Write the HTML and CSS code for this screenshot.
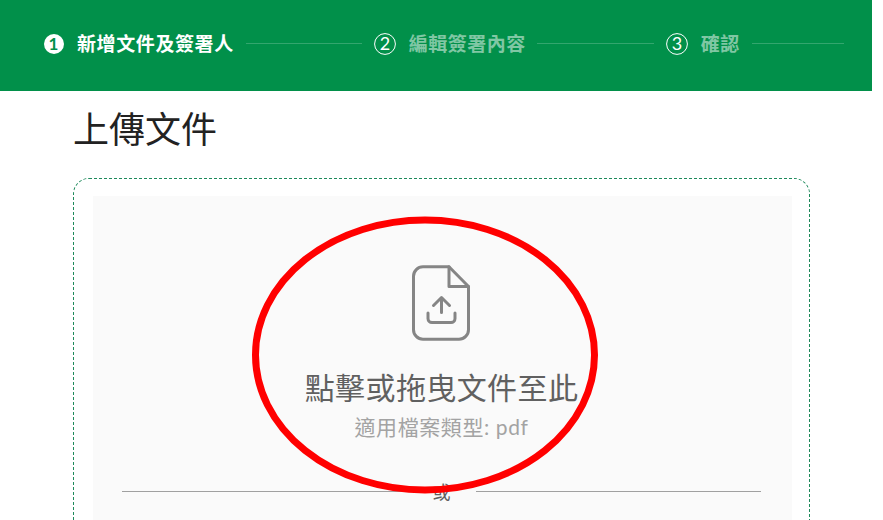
FILE: index.html
```html
<!DOCTYPE html>
<html lang="zh-Hant">
<head>
<meta charset="utf-8">
<title>上傳文件</title>
<link rel="stylesheet" href="styles.css">
</head>
<body>
<div class="page">
  <header class="steps">
    <svg class="step-icon step-icon-on" viewBox="0 0 20 20"><circle cx="10" cy="10" r="10" fill="#fff"/><text x="9.500" y="15.800" text-anchor="middle" class="num-on">1</text></svg>
    <span class="step-label active">新增文件及簽署人</span>
    <span class="line line-first"></span>
    <svg class="step-icon" viewBox="0 0 22 22"><circle cx="11" cy="11" r="10.400" fill="none" stroke="#fff" stroke-width="1"/><text x="11" y="17" text-anchor="middle" class="num-off">2</text></svg>
    <span class="step-label">編輯簽署內容</span>
    <span class="line"></span>
    <svg class="step-icon" viewBox="0 0 22 22"><circle cx="11" cy="11" r="10.400" fill="none" stroke="#fff" stroke-width="1"/><text x="11" y="17" text-anchor="middle" class="num-off">3</text></svg>
    <span class="step-label">確認</span>
    <span class="line line-last"></span>
  </header>
  <main class="content">
    <h1 class="title">上傳文件</h1>
    <section class="dropzone">
      <div class="panel">
        <svg class="file-icon" viewBox="0 0 58 76" fill="none" stroke="#858585" stroke-width="3" stroke-linejoin="round" stroke-linecap="round">
          <path d="M37 1.800H11A9.500 9.500 0 0 0 1.500 11.300V64.700A9.500 9.500 0 0 0 11 74.200H47A9.500 9.500 0 0 0 56.500 64.700V21.500Z"/>
          <path d="M37 1.800V21.500H56.500"/>
          <path d="M29.500 47.500V33M21.500 40.500L29.500 32.500L37.500 40.500"/>
          <path d="M16 48V53.500A4 4 0 0 0 20 57.500H39A4 4 0 0 0 43 53.500V48"/>
        </svg>
        <p class="drop-title">點擊或拖曳文件至此</p>
        <p class="drop-sub">適用檔案類型: pdf</p>
        <div class="divider"><span class="rule"></span><span class="or">或</span><span class="rule"></span></div>
      </div>
    </section>
  </main>
  <svg class="ellipse" viewBox="0 0 352 282"><ellipse cx="176" cy="141" rx="169.500" ry="135" fill="none" stroke="#f00" stroke-width="7"/></svg>
</div>
</body>
</html>
```
FILE: styles.css
```css
* { box-sizing: border-box; }
html, body { margin: 0; height: 100%; overflow: hidden; background: #fff; }
body { font-family: Lato, "Noto Sans CJK TC", sans-serif; }
.page { position: relative; width: 872px; height: 520px; overflow: hidden; }
.steps {
  height: 91px;
  background: #01904a;
  display: flex;
  align-items: center;
  padding: 0 28px 4px 44px;
}
.step-icon { width: 22px; height: 22px; flex: none; margin-left: 12px; }
.step-icon-on { width: 20px; height: 20px; margin-left: 0; }
.num-on { font: 700 17px Lato, sans-serif; fill: #01904a; }
.num-off { font: 400 18px Lato, sans-serif; fill: #fff; }
.step-label {
  margin-left: 13px;
  font-size: 19px;
  font-weight: 700;
  letter-spacing: .5px;
  line-height: 24px;
  color: rgba(255, 255, 255, .5);
  white-space: nowrap;
}
.step-label.active { color: #fff; letter-spacing: .6px; margin-right: 1px; }
.line { width: 117px; height: 1px; margin-left: 11px; background: rgba(255, 255, 255, .2); flex: none; }
.line-first { width: 116px; }
.line-last { width: 92px; margin-left: 12px; }
.content { padding: 14px 62px 0 73px; }
.title {
  margin: 0 0 25px;
  font-size: 36px;
  font-weight: 400;
  line-height: 48px;
  color: #222;
}
.dropzone {
  height: 400px;
  border: 1px dashed #1d8a5b;
  border-radius: 16px;
  padding: 17px 17px 0 19px;
}
.panel {
  height: 380px;
  background: #fafafa;
  display: flex;
  flex-direction: column;
  align-items: center;
  padding: 69px 31px 0 29px;
}
.file-icon { width: 58px; height: 76px; margin-left: -1px; flex: none; }
.drop-title {
  margin: 26px 0 0;
  font-size: 30px;
  line-height: 40px;
  letter-spacing: .4px;
  color: #606060;
  white-space: nowrap;
}
.drop-sub {
  margin: 6px 0 0;
  font-size: 21px;
  line-height: 28px;
  letter-spacing: .6px;
  color: #a3a3a3;
  white-space: nowrap;
}
.divider { align-self: stretch; display: flex; align-items: center; margin-top: 38px; height: 24px; }
.rule { flex: 1; height: 1px; background: #a0a0a0; }
.or { width: 69px; text-align: center; font-size: 18px; line-height: 24px; color: #606060; position: relative; top: 1px; }
.ellipse { position: absolute; left: 249px; top: 214px; width: 352px; height: 282px; }
```
